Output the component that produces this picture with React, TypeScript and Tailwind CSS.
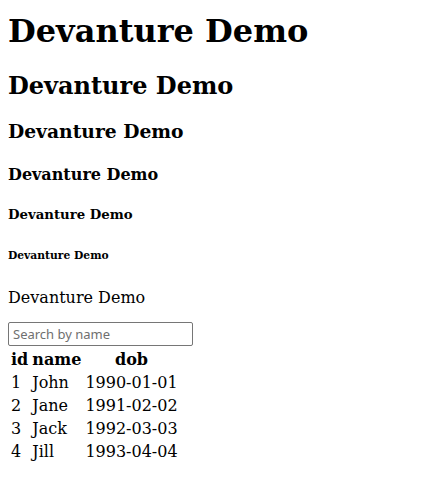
const people = [
  { id: 1, name: 'John', dob: '1990-01-01' },
  { id: 2, name: 'Jane', dob: '1991-02-02' },
  { id: 3, name: 'Jack', dob: '1992-03-03' },
  { id: 4, name: 'Jill', dob: '1993-04-04' },
];

export default function App() {
  return (
    <div className="min-h-screen bg-white px-2 pt-[12px] font-['DejaVu_Serif',serif] leading-[normal] text-black">
      <h1 className="text-[32px] font-bold">Devanture Demo</h1>
      <h2 className="mt-[21.44px] text-[24px] font-bold">Devanture Demo</h2>
      <h3 className="mt-[19.92px] text-[18.72px] font-bold">Devanture Demo</h3>
      <h4 className="mt-[22.3px] text-[16px] font-bold">Devanture Demo</h4>
      <h5 className="mt-[23.2px] text-[13.28px] font-bold">Devanture Demo</h5>
      <h6 className="mt-[27px] text-[10.72px] font-bold">Devanture Demo</h6>
      <p className="mt-[26px] mb-[15px] text-[16px]">Devanture Demo</p>

      <div className="flex">
        <input
          type="text"
          placeholder="Search by name"
          className="h-[24px] w-[185px] rounded-[2px] border border-[#767676] px-[4px] font-['Noto_Sans',sans-serif] text-[13px] text-black placeholder:text-[#6f6f6f]"
        />
      </div>

      <table className="mt-[1px] border-separate border-spacing-[2px] text-[16px]">
        <thead>
          <tr>
            <th className="p-[1px] text-center font-bold">id</th>
            <th className="p-[1px] text-center font-bold">name</th>
            <th className="p-[1px] text-center font-bold">dob</th>
          </tr>
        </thead>
        <tbody>
          {people.map((p) => (
            <tr key={p.id}>
              <td className="p-[1px] text-left">{p.id}</td>
              <td className="p-[1px] text-left">{p.name}</td>
              <td className="p-[1px] text-left">{p.dob}</td>
            </tr>
          ))}
        </tbody>
      </table>
    </div>
  );
}
